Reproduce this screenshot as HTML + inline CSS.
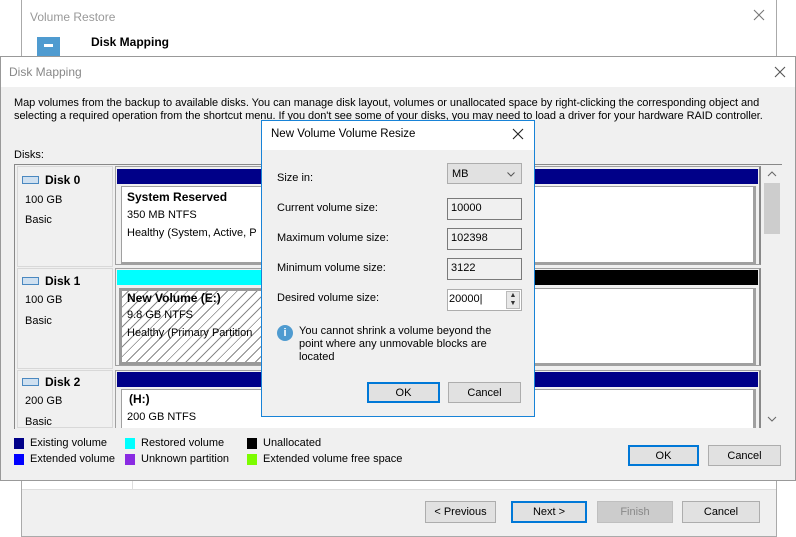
<!DOCTYPE html>
<html><head><meta charset="utf-8"><style>
*{box-sizing:border-box;margin:0;padding:0}
body{width:796px;height:537px;background:#fff;position:relative;overflow:hidden;font-family:"Liberation Sans",sans-serif;font-size:11px;color:#000}
.abs{position:absolute}
.btn{position:absolute;background:#e1e1e1;border:1px solid #adadad;text-align:center;font-size:11px;line-height:20px}
.btn.def{border:2px solid #0078d7;line-height:18px}
.t{position:absolute;white-space:nowrap}
.bar{position:absolute;height:15px}
.vol{position:absolute;background:#fff;border:1px solid #a0a0a0;border-right:3px solid #a0a0a0;border-bottom:2px solid #a0a0a0}
.dl{position:absolute;left:17px;width:96px;background:#f0f0f0;border:1px solid #d8d8d8}
.ico{display:inline-block;width:17px;height:8px;border:1px solid #4a88c0;background:#cfe0f0;vertical-align:middle;margin-right:6px;position:relative;top:-1px}
.sw{position:absolute;width:10px;height:11px}
.fld{position:absolute;left:447px;width:75px;height:22px;border:1px solid #7a7a7a;background:#f0f0f0;padding:3px 0 0 3px}
.x{position:absolute}
</style></head><body>
<!-- back window -->
<div class="abs" style="left:21px;top:-1px;width:756px;height:538px;border:1px solid #aaa;background:#f0f0f0"></div>
<div class="abs" style="left:22px;top:0;width:754px;height:58px;background:#fff"></div>
<div class="t" style="left:30px;top:10px;color:#999;font-size:12px">Volume Restore</div>
<svg class="x" style="left:753px;top:9px" width="12" height="12"><path d="M1 1L11 11M11 1L1 11" stroke="#777" stroke-width="1.1"/></svg>
<div class="abs" style="left:37px;top:37px;width:23px;height:20px;background:#4f9bd0"></div>
<div class="abs" style="left:44px;top:44px;width:9px;height:3px;background:#fff"></div>
<div class="t" style="left:91px;top:35px;font-weight:bold;font-size:12px">Disk Mapping</div>
<div class="abs" style="left:22px;top:481px;width:754px;height:9px;background:#fff;border-bottom:1px solid #ddd"></div>
<div class="abs" style="left:132px;top:481px;width:1px;height:9px;background:#ddd"></div>
<div class="btn" style="left:425px;top:501px;width:71px;height:22px">&lt; Previous</div>
<div class="btn def" style="left:511px;top:501px;width:76px;height:22px">Next &gt;</div>
<div class="btn" style="left:597px;top:501px;width:76px;height:22px;background:#ccc;border-color:#bfbfbf;color:#888">Finish</div>
<div class="btn" style="left:682px;top:501px;width:78px;height:22px">Cancel</div>

<!-- Disk Mapping dialog -->
<div class="abs" style="left:0;top:56px;width:796px;height:425px;border:1px solid #999;background:#f0f0f0"></div>
<div class="abs" style="left:1px;top:57px;width:794px;height:30px;background:#fff"></div>
<div class="t" style="left:9px;top:65px;color:#888;font-size:12px">Disk Mapping</div>
<svg class="x" style="left:774px;top:66px" width="12" height="12"><path d="M1 1L11 11M11 1L1 11" stroke="#555" stroke-width="1.1"/></svg>
<div class="t" style="left:14px;top:97px;line-height:13px;letter-spacing:-0.05px">Map volumes from the backup to available disks. You can manage disk layout, volumes or unallocated space by right-clicking the corresponding object and<br>selecting a required operation from the shortcut menu. If you don't see some of your disks, you may need to load a driver for your hardware RAID controller.</div>
<div class="t" style="left:14px;top:149px">Disks:</div>
<div class="abs" style="left:14px;top:164px;width:768px;height:265px;border-top:1px solid #888;border-left:1px solid #888;background:#f0f0f0"></div>
<!-- scrollbar -->
<div class="abs" style="left:764px;top:165px;width:17px;height:263px;background:#f0f0f0"></div>
<div class="abs" style="left:764px;top:183px;width:16px;height:51px;background:#cdcdcd"></div>
<svg class="x" style="left:767px;top:171px" width="10" height="6"><path d="M1 5L5 1L9 5" stroke="#666" fill="none"/></svg>
<svg class="x" style="left:767px;top:416px" width="10" height="6"><path d="M1 1L5 5L9 1" stroke="#666" fill="none"/></svg>

<!-- Disk 0 -->
<div class="dl" style="top:166px;height:101px"></div>
<div class="t" style="left:22px;top:173px;font-weight:bold;font-size:12px"><span class="ico"></span>Disk 0</div>
<div class="t" style="left:25px;top:194px">100 GB</div>
<div class="t" style="left:25px;top:214px">Basic</div>
<div class="abs" style="left:115px;top:166px;width:646px;height:99px;border:1px solid #a0a0a0;border-right:2px solid #888"></div>
<div class="bar" style="left:117px;top:169px;width:641px;background:#000088"></div>
<div class="vol" style="left:121px;top:186px;width:635px;height:78px"></div>
<div class="t" style="left:127px;top:190px;font-weight:bold;font-size:12px">System Reserved</div>
<div class="t" style="left:127px;top:209px">350 MB NTFS</div>
<div class="t" style="left:127px;top:227px">Healthy (System, Active, P</div>

<!-- Disk 1 -->
<div class="dl" style="top:268px;height:101px"></div>
<div class="t" style="left:22px;top:274px;font-weight:bold;font-size:12px"><span class="ico"></span>Disk 1</div>
<div class="t" style="left:25px;top:294px">100 GB</div>
<div class="t" style="left:25px;top:315px">Basic</div>
<div class="abs" style="left:115px;top:268px;width:646px;height:98px;border:1px solid #a0a0a0;border-right:2px solid #888"></div>
<div class="bar" style="left:117px;top:270px;width:300px;background:#00ffff"></div>
<div class="bar" style="left:417px;top:270px;width:341px;background:#000"></div>
<div class="abs" style="left:119px;top:288px;width:300px;height:77px;border:3px solid #999;background:repeating-linear-gradient(135deg,#fff 0 4px,#888 4px 5px,#fff 5px 7px)"></div>
<div class="vol" style="left:421px;top:288px;width:335px;height:77px"></div>
<div class="t" style="left:127px;top:291px;font-weight:bold;font-size:12px">New Volume (E:)</div>
<div class="t" style="left:127px;top:309px">9.8 GB NTFS</div>
<div class="t" style="left:127px;top:327px">Healthy (Primary Partition</div>

<!-- Disk 2 -->
<div class="dl" style="top:370px;height:58px"></div>
<div class="t" style="left:22px;top:375px;font-weight:bold;font-size:12px"><span class="ico"></span>Disk 2</div>
<div class="t" style="left:25px;top:395px">200 GB</div>
<div class="t" style="left:25px;top:416px">Basic</div>
<div class="abs" style="left:115px;top:370px;width:646px;height:58px;border:1px solid #a0a0a0;border-right:2px solid #888;border-bottom:none"></div>
<div class="bar" style="left:117px;top:372px;width:641px;background:#000088"></div>
<div class="abs" style="left:121px;top:389px;width:635px;height:39px;background:#fff;border:1px solid #a0a0a0;border-right:3px solid #a0a0a0;border-bottom:none"></div>
<div class="t" style="left:129px;top:392px;font-weight:bold;font-size:12px">(H:)</div>
<div class="t" style="left:127px;top:411px">200 GB NTFS</div>

<!-- legend -->
<div class="sw" style="left:14px;top:438px;background:#000088"></div><div class="t" style="left:30px;top:437px">Existing volume</div>
<div class="sw" style="left:125px;top:438px;background:#00ffff"></div><div class="t" style="left:141px;top:437px">Restored volume</div>
<div class="sw" style="left:247px;top:438px;background:#000"></div><div class="t" style="left:263px;top:437px">Unallocated</div>
<div class="sw" style="left:14px;top:454px;background:#0000ff"></div><div class="t" style="left:30px;top:453px">Extended volume</div>
<div class="sw" style="left:125px;top:454px;background:#8a2be2"></div><div class="t" style="left:141px;top:453px">Unknown partition</div>
<div class="sw" style="left:247px;top:454px;background:#7cfc00"></div><div class="t" style="left:263px;top:453px">Extended volume free space</div>
<div class="btn def" style="left:628px;top:445px;width:71px;height:21px">OK</div>
<div class="btn" style="left:708px;top:445px;width:73px;height:21px">Cancel</div>

<!-- modal -->
<div class="abs" style="left:261px;top:120px;width:274px;height:297px;border:1px solid #1883d7;background:#f0f0f0"></div>
<div class="abs" style="left:262px;top:121px;width:272px;height:29px;background:#fff"></div>
<div class="t" style="left:271px;top:128px;font-size:11.5px">New Volume Volume Resize</div>
<svg class="x" style="left:512px;top:128px" width="12" height="12"><path d="M1 1L11 11M11 1L1 11" stroke="#222" stroke-width="1.1"/></svg>
<div class="t" style="left:277px;top:172px">Size in:</div>
<div class="abs" style="left:447px;top:163px;width:75px;height:21px;border:1px solid #adadad;background:#e1e1e1;padding:4px 0 0 4px">MB<svg style="position:absolute;right:6px;top:8px" width="8" height="5"><path d="M0.5 0.5L4 4L7.5 0.5" stroke="#555" fill="none"/></svg></div>
<div class="t" style="left:277px;top:202px">Current volume size:</div>
<div class="fld" style="top:198px">10000</div>
<div class="t" style="left:277px;top:232px">Maximum volume size:</div>
<div class="fld" style="top:228px">102398</div>
<div class="t" style="left:277px;top:262px">Minimum volume size:</div>
<div class="fld" style="top:258px">3122</div>
<div class="t" style="left:277px;top:292px">Desired volume size:</div>
<div class="fld" style="top:289px;background:#fff;border-color:#adadad;padding-left:1px">20000|</div>
<div class="abs" style="left:506px;top:291px;width:14px;height:18px;background:#e8e8e8;border:1px solid #bbb;font-size:7px;line-height:8px;text-align:center;color:#333">▲<br>▼</div>
<div class="abs" style="left:277px;top:325px;width:16px;height:16px;border-radius:50%;background:#4f9bd0;color:#fff;font-weight:bold;font-size:11px;text-align:center;line-height:16px">i</div>
<div class="t" style="left:299px;top:325px;line-height:13px">You cannot shrink a volume beyond the<br>point where any unmovable blocks are<br>located</div>
<div class="btn def" style="left:367px;top:382px;width:73px;height:21px">OK</div>
<div class="btn" style="left:448px;top:382px;width:73px;height:21px">Cancel</div>
</body></html>
